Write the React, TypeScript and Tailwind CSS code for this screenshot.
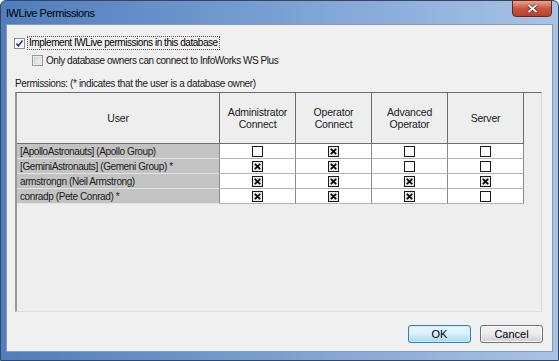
import React from "react";

type Row = { user: string; perms: boolean[] };

const rows: Row[] = [
  { user: "[ApolloAstronauts] (Apollo Group)", perms: [false, true, false, false] },
  { user: "[GeminiAstronauts] (Gemeni Group) *", perms: [true, true, false, false] },
  { user: "armstrongn (Neil Armstrong)", perms: [true, true, true, true] },
  { user: "conradp (Pete Conrad) *", perms: [true, true, true, false] },
];

const columns = [
  ["Administrator", "Connect"],
  ["Operator", "Connect"],
  ["Advanced", "Operator"],
  ["Server"],
];

// Vista/7 style checkbox for the dialog options
function WinCheck({ checked }: { checked: boolean }) {
  return (
    <svg width="11" height="11" viewBox="0 0 11 11" className="shrink-0">
      <defs>
        <linearGradient id={checked ? "cbOn" : "cbOff"} x1="0" y1="0" x2="1" y2="1">
          <stop offset="0" stopColor={checked ? "#f4f4f4" : "#d6d6d6"} />
          <stop offset="1" stopColor={checked ? "#ffffff" : "#f4f4f4"} />
        </linearGradient>
      </defs>
      <rect x="0.5" y="0.5" width="10" height="10" fill="#fff" stroke="#8e8f8f" />
      <rect x="2" y="2" width="7" height="7" fill={`url(#${checked ? "cbOn" : "cbOff"})`} stroke={checked ? "none" : "#b8b8b8"} strokeWidth="0.5" />
      {checked && (
        <path d="M2.4 5.6 L4.5 7.8 L8.6 2.6" fill="none" stroke="#1c3e8f" strokeWidth="1.6" />
      )}
    </svg>
  );
}

// Classic grid checkbox with a cross
function GridCheck({ checked }: { checked: boolean }) {
  return (
    <svg width="11" height="11" viewBox="0 0 11 11">
      <rect x="0.5" y="0.5" width="10" height="10" fill={checked ? "#e6e6e6" : "#fff"} stroke="#1a1a1a" />
      {checked && (
        <path d="M2.8 2.8 L8.2 8.2 M8.2 2.8 L2.8 8.2" fill="none" stroke="#000" strokeWidth="1.7" />
      )}
    </svg>
  );
}

export default function App() {
  return (
    <div
      className="w-[559px] h-[361px] flex flex-col rounded-t-[6px] border border-[#35475f] bg-gradient-to-r from-[#4f7dbd] via-[#7aa0d3] to-[#a9c3e6]"
      style={{ fontFamily: '"Liberation Sans", Arial, sans-serif' }}
    >
      {/* Title bar */}
      <div className="h-[23px] flex items-start justify-between pl-[5px] pr-[6px]">
        <span className="mt-[5px] text-[11px] leading-[14px] text-black tracking-[-0.45px]">IWLive Permissions</span>
        <div className="w-[40px] h-[17px] -mt-px rounded-b-[4px] border border-[#5b2a22] bg-gradient-to-b from-[#e7a593] via-[#c9553f] to-[#b8432c] flex items-center justify-center">
          <svg width="11" height="9" viewBox="0 0 11 9">
            <path d="M1.5 1 L9.5 8 M9.5 1 L1.5 8" stroke="#3c1a14" strokeWidth="3" />
            <path d="M1.5 1 L9.5 8 M9.5 1 L1.5 8" stroke="#fff" strokeWidth="1.8" />
          </svg>
        </div>
      </div>

      {/* Client area */}
      <div className="mx-[5px] h-[328px] border border-[#8a9cb4] bg-[#f0f0f0] flex flex-col text-[10px] leading-[13px] text-black">
        <div className="mt-[11px] ml-[7px] flex items-center gap-[2px]">
          <WinCheck checked />
          <span className="border border-dotted border-[#555] px-[1px] leading-[12px] tracking-[-0.45px]">
            Implement IWLive permissions in this database
          </span>
        </div>
        <div className="mt-[4px] ml-[25px] flex items-center gap-[3px] opacity-90">
          <WinCheck checked={false} />
          <span className="tracking-[-0.45px]">Only database owners can connect to InfoWorks WS Plus</span>
        </div>

        <div className="mt-[10px] ml-[8px] tracking-[-0.38px] text-[#222]">
          Permissions: (* indicates that the user is a database owner)
        </div>

        {/* Grid */}
        <div className="mt-[2px] ml-[8px] w-[527px] h-[220px] border-t border-t-[#6d6d6d] border-l-[2px] border-l-[#9d95a0] border-r border-r-[#d8d8d8] border-b border-b-[#dedede] bg-[#eeeeee] text-[10.5px] tracking-[-0.2px]">
          <div className="grid grid-cols-[203px_76px_76px_76px_76px] w-[507px]">
            {/* header */}
            <div className="h-[51px] flex items-center justify-center border-r border-r-[#6d6d6d] border-b border-b-[#6d6d6d] text-[#222]">
              User
            </div>
            {columns.map((c, i) => (
              <div
                key={i}
                className="h-[51px] flex flex-col items-center justify-center border-r border-r-[#6d6d6d] border-b border-b-[#6d6d6d] text-[#222] leading-[12px]"
              >
                {c.map((t) => (
                  <span key={t}>{t}</span>
                ))}
              </div>
            ))}
            {/* rows */}
            {rows.map((r) => (
              <React.Fragment key={r.user}>
                <div className="h-[15px] pl-[3px] flex items-center bg-[#c3c3c3] border-b border-b-[#e2e2e2] border-r border-r-[#8c8c8c] text-[#1a1a1a] text-[10px] tracking-[-0.4px] whitespace-nowrap">
                  {r.user}
                </div>
                {r.perms.map((p, i) => (
                  <div
                    key={i}
                    className="h-[15px] flex items-center justify-center bg-white border-b border-b-[#b4b4b4] border-r border-r-[#8c8c8c]"
                  >
                    <GridCheck checked={p} />
                  </div>
                ))}
              </React.Fragment>
            ))}
          </div>
        </div>

        {/* Buttons */}
        <div className="mt-[13px] mr-[9px] flex justify-end gap-[9px]">
          <button className="w-[63px] h-[18px] rounded-[3px] border border-[#3c7fb1] bg-gradient-to-b from-[#eaf6fd] via-[#d9f0fc] to-[#a7d9f5] text-[11px] leading-[14px] text-black shadow-[inset_0_0_0_1px_#c7ecfd]">
            OK
          </button>
          <button className="w-[63px] h-[18px] rounded-[3px] border border-[#707070] bg-gradient-to-b from-[#f2f2f2] via-[#ebebeb] to-[#cfcfcf] text-[11px] leading-[14px] text-black shadow-[inset_0_0_0_1px_#fbfbfb]">
            Cancel
          </button>
        </div>
      </div>
    </div>
  );
}
